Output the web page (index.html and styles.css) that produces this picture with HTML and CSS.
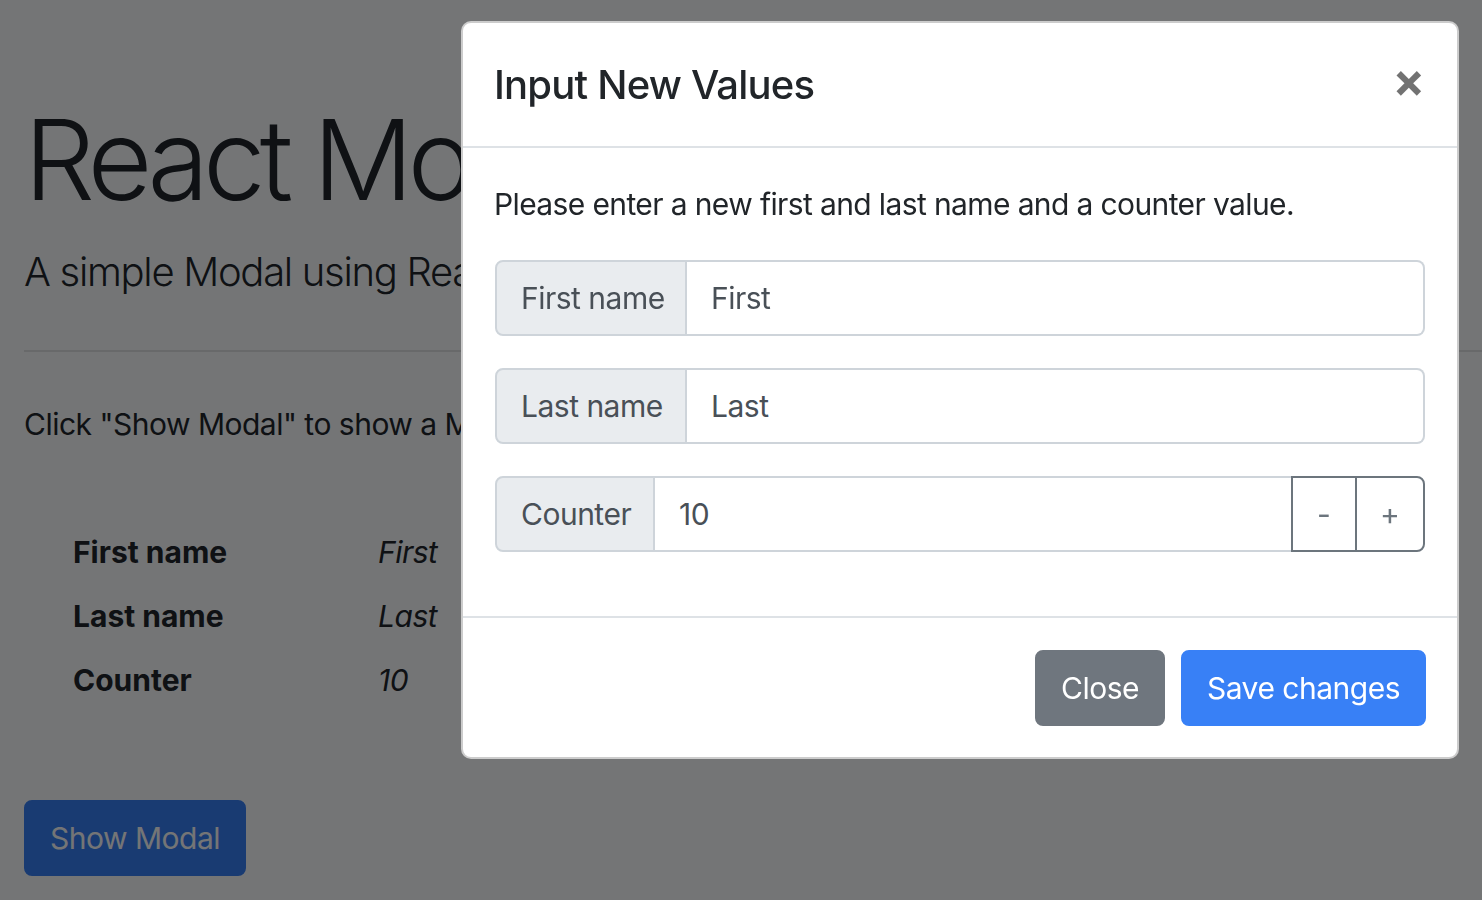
FILE: index.html
```html
<!DOCTYPE html>
<html lang="en">
<head>
<meta charset="utf-8">
<title>React Modal</title>
<link rel="stylesheet" href="styles.css">
</head>
<body>
<main class="page">
  <h1 class="display">React Modal</h1>
  <p class="lead">A simple Modal using React and Bootstrap</p>
  <hr class="divider">
  <p class="intro">Click "Show Modal" to show a Modal dialog.</p>
  <table class="values">
    <tbody>
      <tr><th>First name</th><td><em>First</em></td></tr>
      <tr><th>Last name</th><td><em>Last</em></td></tr>
      <tr><th>Counter</th><td><em>10</em></td></tr>
    </tbody>
  </table>
  <button class="btn btn-primary" type="button">Show Modal</button>
</main>

<div class="backdrop"></div>

<div class="modal" role="dialog">
  <div class="modal-header">
    <h5 class="modal-title">Input New Values</h5>
    <button class="close" type="button" aria-label="Close">&times;</button>
  </div>
  <div class="modal-body">
    <p class="modal-text">Please enter a new first and last name and a counter value.</p>
    <div class="input-group">
      <span class="addon addon-name">First name</span>
      <input class="field" type="text" value="First">
    </div>
    <div class="input-group">
      <span class="addon addon-name">Last name</span>
      <input class="field" type="text" value="Last">
    </div>
    <div class="input-group">
      <span class="addon addon-counter">Counter</span>
      <input class="field field-mid" type="text" value="10">
      <button class="step step-minus" type="button">-</button>
      <button class="step step-plus" type="button">+</button>
    </div>
  </div>
  <div class="modal-footer">
    <button class="btn btn-secondary" type="button">Close</button>
    <button class="btn btn-primary" type="button">Save changes</button>
  </div>
</div>
</body>
</html>
```

FILE: styles.css
```css
* { box-sizing: border-box; }

html, body {
  margin: 0;
  height: 100%;
}

body {
  font-family: "Inter", "Liberation Sans", sans-serif;
  font-size: 30px;
  line-height: 48px;
  letter-spacing: -0.5px;
  color: #212529;
  background: #ffffff;
  overflow: hidden;
}

.page {
  padding: 92px 0 0 24px;
}

.display {
  margin: 0;
  font-size: 112px;
  font-weight: 300;
  line-height: 134px;
  letter-spacing: -6px;
  white-space: nowrap;
}

.lead {
  margin: 16px 0 0;
  font-size: 40px;
  font-weight: 300;
  line-height: 60px;
  letter-spacing: -1.3px;
  white-space: nowrap;
}

.divider {
  margin: 48px 0 0;
  border: 0;
  border-top: 2px solid rgba(0, 0, 0, 0.1);
}

.intro {
  margin: 48px 0 0;
  white-space: nowrap;
}

.values {
  margin: 72px 0 0 49px;
  border-collapse: collapse;
}

.values th,
.values td {
  padding: 8px 0;
  text-align: left;
  vertical-align: top;
}

.values th {
  width: 305px;
  font-weight: 700;
  letter-spacing: 0;
}

.values td {
  font-weight: 400;
}

.page .btn {
  margin-top: 88px;
}

.btn {
  display: inline-block;
  font-family: inherit;
  font-size: 30px;
  line-height: 48px;
  letter-spacing: -0.5px;
  padding: 12px 24px;
  border: 2px solid transparent;
  border-radius: 8px;
  color: #ffffff;
  cursor: pointer;
}

.btn-primary {
  background: #3880f6;
  border-color: #3880f6;
}

.btn-secondary {
  background: #6f767e;
  border-color: #6f767e;
}

.backdrop {
  position: fixed;
  inset: 0;
  background: rgba(0, 1, 4, 0.545);
}

.modal {
  position: absolute;
  left: 461px;
  top: 21px;
  width: 998px;
  background: #ffffff;
  border: 2px solid rgba(0, 0, 0, 0.2);
  border-radius: 10px;
  overflow: hidden;
}

.modal-header {
  display: flex;
  align-items: center;
  justify-content: space-between;
  padding: 32px 32px 31px 31px;
  border-bottom: 2px solid #dee2e6;
}

.modal-title {
  margin: 0;
  font-size: 40px;
  font-weight: 500;
  line-height: 60px;
  letter-spacing: -0.8px;
}

.close {
  padding: 0;
  margin: 0 0 10px 0;
  border: 0;
  background: transparent;
  font-family: inherit;
  font-size: 48px;
  font-weight: 700;
  line-height: 48px;
  color: #000000;
  opacity: 0.55;
  cursor: pointer;
}

.modal-body {
  padding: 32px;
}

.modal-text {
  margin: 0 0 32px -1px;
  letter-spacing: -0.62px;
}

.input-group {
  display: flex;
  height: 76px;
  margin-bottom: 32px;
}

.addon {
  display: flex;
  align-items: center;
  padding: 0 24px;
  background: #e9ecef;
  border: 2px solid #ced4da;
  border-radius: 8px 0 0 8px;
  color: #495057;
  white-space: nowrap;
}

.addon-name { width: 192px; }
.addon-counter { width: 160px; }

.field {
  flex: 1;
  min-width: 0;
  padding: 0 24px;
  font-family: inherit;
  font-size: 30px;
  letter-spacing: -0.5px;
  color: #495057;
  background: #ffffff;
  border: 2px solid #ced4da;
  border-left: 0;
  border-radius: 0 8px 8px 0;
  outline: none;
}

.field-mid {
  border-radius: 0;
  border-right: 0;
}

.step {
  padding: 0;
  font-family: inherit;
  font-size: 30px;
  color: #6c757d;
  background: #ffffff;
  border: 2px solid #6c757d;
  cursor: pointer;
}

.step-minus {
  width: 66px;
  border-radius: 0;
}

.step-plus {
  width: 70px;
  margin-left: -2px;
  border-radius: 0 8px 8px 0;
}

.modal-footer {
  display: flex;
  justify-content: flex-end;
  gap: 16px;
  padding: 32px 31px 31px;
  border-top: 2px solid #dee2e6;
}
```
